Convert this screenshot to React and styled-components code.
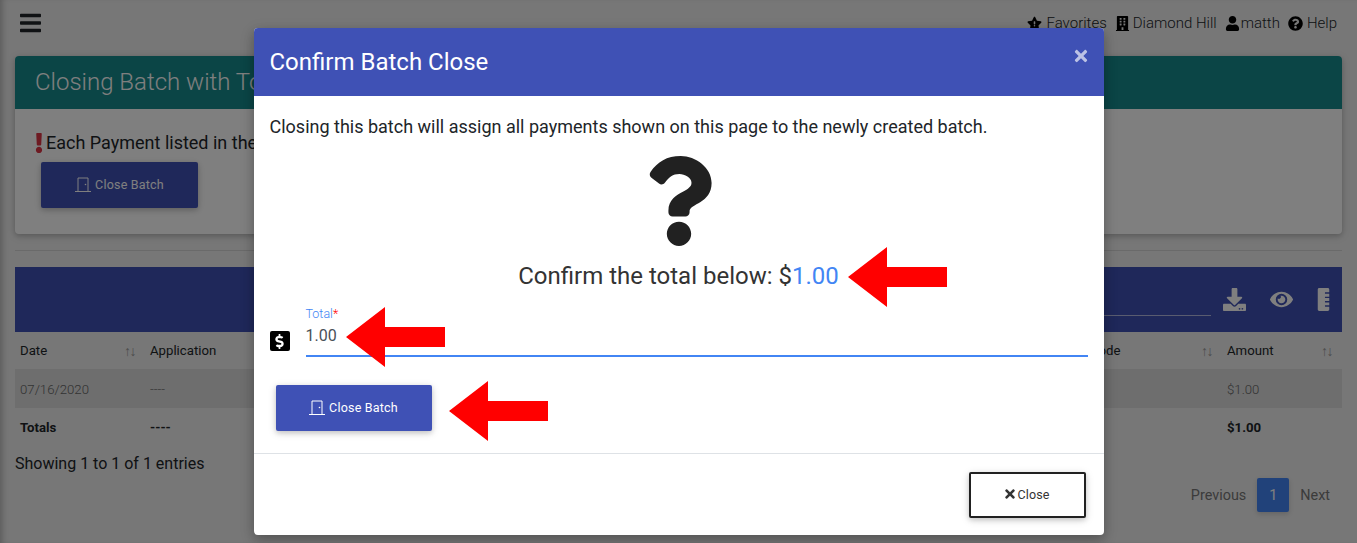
import React from "react";
import styled, { createGlobalStyle } from "styled-components";
import {
  FaBars, FaBuilding, FaUser, FaQuestionCircle, FaExclamation,
  FaDownload, FaEye, FaRulerVertical, FaTimes, FaQuestion, FaDollarSign,
} from "react-icons/fa";

const Global = createGlobalStyle`
  html, body { margin: 0; padding: 0; height: 543px; overflow: hidden; background: #eeeeee; }
  body { font-family: Roboto, "Liberation Sans", sans-serif; color: #212529; }
  * { box-sizing: border-box; }
`;

const Page = styled.div`
  position: relative;
  width: 1357px;
  height: 543px;
  overflow: hidden;
  padding: 0 15px;
  box-shadow: inset 6px 0 6px -4px rgba(0, 0, 0, 0.25);
`;

const TopBar = styled.header`
  height: 56px;
  display: flex;
  align-items: center;
  justify-content: space-between;
  padding: 0 5px 10px 5px;
`;

const Burger = styled.span`
  display: flex;
  font-size: 24px;
  color: #212529;
  svg { width: 21px; }
`;

const TopLinks = styled.nav`
  display: flex;
  gap: 8px;
  font-size: 15px;
  font-weight: 300;
  color: #212529;
`;

const TopLink = styled.span`
  display: flex;
  align-items: center;
  gap: ${(p) => p.$gap}px;
  svg { width: 15px; height: 15px; color: #000; flex: none; }
`;

const Card = styled.section`
  background: #fff;
  border-radius: 4px;
  height: 178px;
  box-shadow: 0 2px 5px rgba(0, 0, 0, 0.16), 0 2px 10px rgba(0, 0, 0, 0.12);
  overflow: hidden;
`;

const CardHead = styled.div`
  height: 53px;
  background: #178a8c;
  color: #fff;
  font-size: 24px;
  font-weight: 300;
  display: flex;
  align-items: center;
  padding: 0 20px 2px;
`;

const CardBody = styled.div`
  padding: 22px 20px;
`;

const Notice = styled.div`
  display: flex;
  align-items: center;
  font-size: 18px;
  line-height: 24px;
  svg { color: #dc3545; width: 8px; height: 20px; margin-right: 3px; }
`;

const PrimaryButton = styled.button`
  display: flex;
  align-items: center;
  justify-content: center;
  gap: 4px;
  width: ${(p) => p.$width}px;
  height: 46px;
  padding: 0 0 2px;
  border: 0;
  border-radius: 2px;
  background: #3f51b5;
  color: #fff;
  font: 400 12.5px Roboto, sans-serif;
  letter-spacing: 0.2px;
  box-shadow: 0 2px 5px rgba(0, 0, 0, 0.16), 0 2px 10px rgba(0, 0, 0, 0.12);
`;

const CardAction = styled.div`
  margin: 7px 0 0 6px;
`;

const Divider = styled.hr`
  margin: 16px 0;
  border: 0;
  border-top: 1px solid rgba(0, 0, 0, 0.1);
`;

const TableBar = styled.div`
  height: 65px;
  background: #3f51b5;
  display: flex;
  align-items: center;
  justify-content: flex-end;
  gap: 24px;
  padding-right: 7px;
  color: #fff;
  font-size: 23px;
  svg { display: block; }
`;

const SearchLine = styled.div`
  width: 200px;
  height: 1px;
  background: rgba(255, 255, 255, 0.6);
  align-self: flex-end;
  margin: 0 -12px 16px 0;
`;

const RulerIcon = styled(FaRulerVertical)`
  margin-left: -5px;
`;

const Table = styled.table`
  width: 100%;
  border-collapse: collapse;
  table-layout: fixed;
  font-size: 13.2px;
`;

const Th = styled.th`
  height: 37px;
  padding: 0 10px 0 5px;
  font-weight: 400;
  text-align: left;
  color: #212529;
`;

const ThInner = styled.div`
  display: flex;
  justify-content: space-between;
  align-items: center;
`;

const SortMark = styled.span`
  color: #999;
  font-size: 14px;
  font-weight: 300;
  letter-spacing: -1.5px;
`;

const Row = styled.tr`
  background: ${(p) => (p.$striped ? "#dcdcdc" : "transparent")};
`;

const Td = styled.td`
  height: ${(p) => (p.$bold ? 38 : 39)}px;
  padding: ${(p) => (p.$bold ? "0 5px" : "1px 5px 0")};
  color: ${(p) => (p.$bold ? "#212529" : "#666")};
  font-weight: ${(p) => (p.$bold ? 700 : 300)};
`;

const TableFoot = styled.div`
  display: flex;
  justify-content: space-between;
  align-items: flex-start;
`;

const Entries = styled.div`
  font-size: 16px;
  margin-top: 8px;
`;

const Pager = styled.div`
  display: flex;
  align-items: center;
  margin: 32px 12px 0 0;
  font-size: 14.4px;
  color: #777;
  gap: 11px;
`;

const PageNumber = styled.span`
  width: 32px;
  height: 34px;
  display: flex;
  align-items: center;
  justify-content: center;
  border-radius: 2px;
  background: #4285f4;
  color: #fff;
  box-shadow: 0 2px 5px rgba(0, 0, 0, 0.16);
`;

const Backdrop = styled.div`
  position: absolute;
  inset: 0;
  background: rgba(0, 0, 0, 0.5);
  display: flex;
  justify-content: center;
  padding-top: 28px;
`;

const Modal = styled.div`
  position: relative;
  width: 850px;
  height: 507px;
  background: #fff;
  border-radius: 4px;
  overflow: hidden;
  box-shadow: 0 5px 11px rgba(0, 0, 0, 0.18), 0 4px 15px rgba(0, 0, 0, 0.15);
  display: flex;
  flex-direction: column;
`;

const ModalHead = styled.div`
  height: 68px;
  background: #3f51b5;
  color: #fff;
  display: flex;
  align-items: center;
  justify-content: space-between;
  padding: 0 14px 0 16px;
  font-size: 24px;
`;

const CloseX = styled.span`
  display: flex;
  color: #fff;
  opacity: 0.65;
  font-size: 18px;
  margin-bottom: 12px;
`;

const ModalBody = styled.div`
  flex: 1;
  padding: 19px 16px 0;
`;

const Lead = styled.p`
  margin: 0;
  font-size: 18px;
  line-height: 24px;
  color: #212529;
`;

const BigQuestion = styled.div`
  display: flex;
  justify-content: center;
  margin-top: 17px;
  font-size: 90px;
  color: #212121;
  svg { display: block; }
`;

const ConfirmLine = styled.div`
  text-align: center;
  font-size: 24px;
  line-height: 29px;
  color: #333;
  margin-top: 16px;
`;

const Blue = styled.span`
  color: #4285f4;
`;

const FieldRow = styled.div`
  display: flex;
  align-items: flex-end;
  gap: 16px;
  margin-top: 16px;
`;

const DollarBox = styled.span`
  width: 20px;
  height: 20px;
  margin-bottom: 6px;
  border-radius: 2px;
  background: #000;
  color: #fff;
  display: flex;
  align-items: center;
  justify-content: center;
  font-size: 15px;
`;

const Field = styled.div`
  flex: 1;
  height: 50px;
  border-bottom: 2px solid #4285f4;
`;

const FieldLabel = styled.div`
  font-size: 12.5px;
  line-height: 14px;
  font-weight: 300;
  color: #4285f4;
`;

const Required = styled.span`
  color: #ff0000;
`;

const FieldValue = styled.div`
  font-size: 16px;
  line-height: 24px;
  margin-top: 3px;
  color: #495057;
`;

const ModalAction = styled.div`
  margin: 28px 0 0 6px;
`;

const ModalFoot = styled.div`
  height: 82px;
  border-top: 1px solid #dee2e6;
  display: flex;
  justify-content: flex-end;
  padding: 18px 18px 0 0;
`;

const OutlineButton = styled.button`
  width: 117px;
  height: 46px;
  display: flex;
  align-items: center;
  justify-content: center;
  gap: 1px;
  padding: 0 2px 2px 0;
  background: #fff;
  border: 2px solid #212121;
  border-radius: 2px;
  color: #333;
  font: 400 12.5px Roboto, sans-serif;
  letter-spacing: 0.1px;
  box-shadow: 0 2px 5px rgba(0, 0, 0, 0.16), 0 2px 10px rgba(0, 0, 0, 0.12);
  svg { font-size: 14px; }
`;

const Arrow = styled.svg`
  position: absolute;
  left: ${(p) => p.$x}px;
  top: ${(p) => p.$y}px;
`;

const DoorIcon = () => (
  <svg width="16" height="15" viewBox="0 0 16 15" fill="none" stroke="currentColor" strokeWidth="1">
    <path d="M0 14.5h16M3 14.5V1h10v13.5" />
    <circle cx="10.5" cy="7.5" r="0.8" fill="currentColor" stroke="none" />
  </svg>
);

const StarIcon = () => (
  <svg viewBox="0 0 576 512">
    <path
      fill="currentColor"
      d="M259.3 17.8L194 150.2 47.9 171.5c-26.2 3.8-36.7 36.1-17.7 54.6l105.7 103-25 145.5c-4.5 26.3 23.2 46 46.4 33.7L288 439.6l130.7 68.7c23.2 12.2 50.9-7.4 46.4-33.7l-25-145.5 105.7-103c19-18.5 8.5-50.8-17.7-54.6L382 150.2 316.7 17.8c-11.7-23.6-45.6-23.9-57.4 0z"
    />
    <rect x="258" y="170" width="60" height="120" rx="20" fill="#eeeeee" />
    <circle cx="288" cy="345" r="30" fill="#eeeeee" />
  </svg>
);

const RedArrow = ({ x, y }) => (
  <Arrow $x={x} $y={y} width="100" height="60" viewBox="0 0 100 60">
    <path d="M0 30 L39 0 V20 H99 V40 H39 V60 Z" fill="#ff0000" />
  </Arrow>
);

const Sort = () => <SortMark>↑↓</SortMark>;

export default function App() {
  return (
    <Page>
      <Global />
      <TopBar>
        <Burger><FaBars /></Burger>
        <TopLinks>
          <TopLink $gap={5}><StarIcon />Favorites</TopLink>
          <TopLink $gap={3}><FaBuilding />Diamond Hill</TopLink>
          <TopLink $gap={1}><FaUser />matth</TopLink>
          <TopLink $gap={4}><FaQuestionCircle />Help</TopLink>
        </TopLinks>
      </TopBar>

      <Card>
        <CardHead>Closing Batch with Total</CardHead>
        <CardBody>
          <Notice><FaExclamation />Each Payment listed in the</Notice>
          <CardAction>
            <PrimaryButton $width={157}><DoorIcon />Close Batch</PrimaryButton>
          </CardAction>
        </CardBody>
      </Card>

      <Divider />

      <TableBar>
        <SearchLine />
        <FaDownload />
        <FaEye />
        <RulerIcon />
      </TableBar>
      <Table>
        <colgroup>
          <col style={{ width: 130 }} />
          <col />
          <col style={{ width: 137 }} />
          <col style={{ width: 120 }} />
        </colgroup>
        <thead>
          <tr>
            <Th><ThInner>Date<Sort /></ThInner></Th>
            <Th><ThInner>Application<Sort /></ThInner></Th>
            <Th><ThInner>Code<Sort /></ThInner></Th>
            <Th><ThInner>Amount<Sort /></ThInner></Th>
          </tr>
        </thead>
        <tbody>
          <Row $striped>
            <Td>07/16/2020</Td>
            <Td>----</Td>
            <Td />
            <Td>$1.00</Td>
          </Row>
          <Row>
            <Td $bold>Totals</Td>
            <Td $bold>----</Td>
            <Td $bold />
            <Td $bold>$1.00</Td>
          </Row>
        </tbody>
      </Table>
      <TableFoot>
        <Entries>Showing 1 to 1 of 1 entries</Entries>
        <Pager>
          <span>Previous</span>
          <PageNumber>1</PageNumber>
          <span>Next</span>
        </Pager>
      </TableFoot>

      <Backdrop>
        <Modal>
          <ModalHead>
            Confirm Batch Close
            <CloseX><FaTimes /></CloseX>
          </ModalHead>
          <ModalBody>
            <Lead>Closing this batch will assign all payments shown on this page to the newly created batch.</Lead>
            <BigQuestion><FaQuestion /></BigQuestion>
            <ConfirmLine>Confirm the total below: $<Blue>1.00</Blue></ConfirmLine>
            <FieldRow>
              <DollarBox><FaDollarSign /></DollarBox>
              <Field>
                <FieldLabel>Total<Required>*</Required></FieldLabel>
                <FieldValue>1.00</FieldValue>
              </Field>
            </FieldRow>
            <ModalAction>
              <PrimaryButton $width={156}><DoorIcon />Close Batch</PrimaryButton>
            </ModalAction>
          </ModalBody>
          <ModalFoot>
            <OutlineButton><FaTimes />Close</OutlineButton>
          </ModalFoot>
          <RedArrow x={594} y={219} />
          <RedArrow x={92} y={279} />
          <RedArrow x={195} y={353} />
        </Modal>
      </Backdrop>
    </Page>
  );
}
